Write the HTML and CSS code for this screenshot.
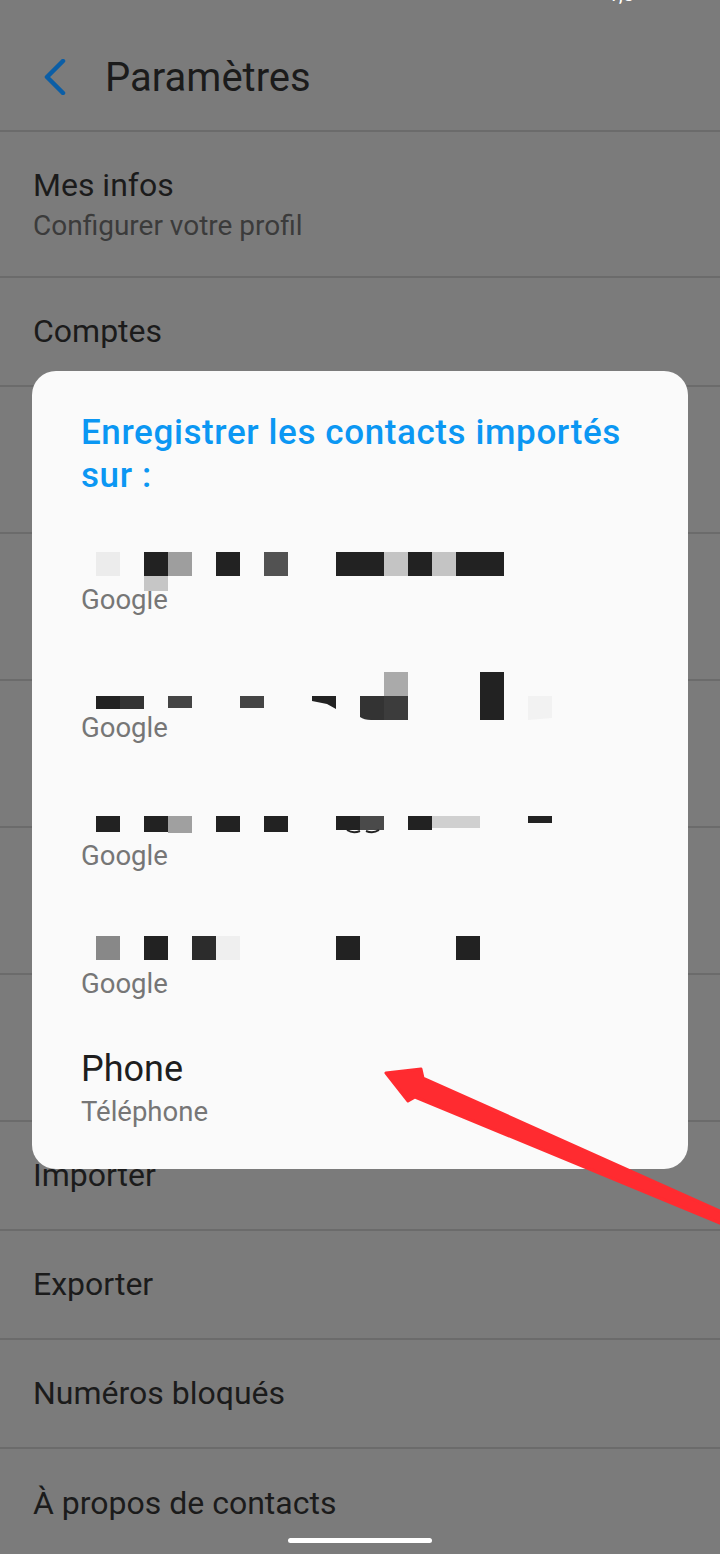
FILE: index.html
```html
<!DOCTYPE html>
<html lang="fr">
<head>
<meta charset="utf-8">
<title>Paramètres</title>
<link rel="stylesheet" href="styles.css">
</head>
<body>
<div class="screen">
  <header class="header">
    <div class="status"><span>1,5</span></div>
    <div class="toolbar">
      <svg class="back" width="24" height="36" viewBox="0 0 24 36"><polyline points="20,2 4,18 20,34" fill="none" stroke="#0b5ea6" stroke-width="4.5" stroke-linecap="round" stroke-linejoin="round"/></svg>
      <h1 class="page-title">Paramètres</h1>
    </div>
  </header>
  <ul class="settings">
    <li class="row two first"><span class="row-title">Mes infos</span><span class="row-sub">Configurer votre profil</span></li>
    <li class="row one"><span class="row-title">Comptes</span></li>
    <li class="row two"></li>
    <li class="row two"></li>
    <li class="row two"></li>
    <li class="row two"></li>
    <li class="row two"></li>
    <li class="row one"><span class="row-title">Importer</span></li>
    <li class="row one"><span class="row-title">Exporter</span></li>
    <li class="row one"><span class="row-title">Numéros bloqués</span></li>
    <li class="row one last"><span class="row-title">À propos de contacts</span></li>
  </ul>

  <div class="dialog">
    <h2 class="dialog-title">Enregistrer les contacts importés sur :</h2>
    <ul class="accounts">
      <li class="account">
        <div class="acc-name">
          <svg class="mosaic" width="480" height="40" viewBox="0 0 480 40">
            <rect x="15" y="15" width="24" height="24" fill="#ececec"/>
            <rect x="63" y="15" width="24" height="24" fill="#222"/>
            <rect x="87" y="15" width="24" height="24" fill="#9e9e9e"/>
            <rect x="63" y="39" width="24" height="15" fill="#c6c6c6"/>
            <rect x="135" y="15" width="24" height="24" fill="#222"/>
            <rect x="183" y="15" width="24" height="24" fill="#525252"/>
            <rect x="255" y="15" width="48" height="24" fill="#222"/>
            <rect x="303" y="15" width="24" height="24" fill="#c4c4c4"/>
            <rect x="327" y="15" width="24" height="24" fill="#222"/>
            <rect x="351" y="15" width="24" height="24" fill="#c4c4c4"/>
            <rect x="375" y="15" width="48" height="24" fill="#222"/>
          </svg>
        </div>
        <div class="acc-sub">Google</div>
      </li>
      <li class="account">
        <div class="acc-name">
          <svg class="mosaic" width="480" height="40" viewBox="0 0 480 40">
            <rect x="15" y="31" width="24" height="13" fill="#222"/>
            <rect x="39" y="31" width="24" height="13" fill="#333"/>
            <rect x="87" y="31" width="24" height="12" fill="#444"/>
            <rect x="159" y="31" width="24" height="12" fill="#444"/>
            <polygon points="231,31 255,31 255,44 246,39 231,36" fill="#222"/>
            <path d="M279 31 H303 V55 H290 Q283 55 279 52 Z" fill="#333"/>
            <rect x="303" y="7" width="24" height="24" fill="#aaa"/>
            <rect x="303" y="31" width="24" height="24" fill="#3c3c3c"/>
            <rect x="399" y="7" width="24" height="48" fill="#222"/>
            <path d="M447 31 H471 V53 L447 55 Z" fill="#f2f2f2"/>
          </svg>
        </div>
        <div class="acc-sub">Google</div>
      </li>
      <li class="account">
        <div class="acc-name">
          <svg class="mosaic" width="480" height="40" viewBox="0 0 480 40">
            <rect x="15" y="23" width="24" height="16" fill="#222"/>
            <rect x="63" y="23" width="24" height="16" fill="#222"/>
            <rect x="87" y="23" width="24" height="17" fill="#a0a0a0"/>
            <rect x="135" y="23" width="24" height="16" fill="#222"/>
            <rect x="183" y="23" width="24" height="16" fill="#222"/>
            <rect x="255" y="23" width="24" height="14" fill="#222"/>
            <rect x="279" y="23" width="24" height="14" fill="#4a4a4a"/>
            <path d="M266 37 Q272 41 279 38 M285 38 Q292 41 298 37" fill="none" stroke="#222" stroke-width="2"/>
            <rect x="327" y="23" width="24" height="14" fill="#222"/>
            <rect x="351" y="23" width="48" height="12" fill="#d0d0d0"/>
            <rect x="447" y="23" width="24" height="7" fill="#222"/>
          </svg>
        </div>
        <div class="acc-sub">Google</div>
      </li>
      <li class="account">
        <div class="acc-name">
          <svg class="mosaic" width="480" height="40" viewBox="0 0 480 40">
            <rect x="15" y="15" width="24" height="24" fill="#888"/>
            <rect x="63" y="15" width="24" height="24" fill="#222"/>
            <rect x="111" y="15" width="24" height="24" fill="#2c2c2c"/>
            <rect x="135" y="15" width="24" height="24" fill="#efefef"/>
            <rect x="255" y="15" width="24" height="24" fill="#222"/>
            <rect x="375" y="15" width="24" height="24" fill="#222"/>
          </svg>
        </div>
        <div class="acc-sub">Google</div>
      </li>
      <li class="account">
        <div class="acc-name phone">Phone</div>
        <div class="acc-sub">Téléphone</div>
      </li>
    </ul>
  </div>

  <svg class="annotation" width="720" height="1554" viewBox="0 0 720 1554">
    <polygon points="386,1073 421,1069 423,1078 722,1212 722,1224 415,1097 408,1101" fill="#ff2b30" stroke="#ff2b30" stroke-width="3" stroke-linejoin="round"/>
  </svg>

  <div class="nav-handle"></div>
</div>
</body>
</html>
```

FILE: styles.css
```css
* {
  box-sizing: border-box;
}

html, body {
  margin: 0;
  padding: 0;
  background: #7b7b7b;
}

body {
  font-family: Roboto, "Noto Sans", "Liberation Sans", sans-serif;
  color: #1b1b1b;
}

.screen {
  position: relative;
  width: 720px;
  height: 1554px;
  overflow: hidden;
  background: #7b7b7b;
}

.header {
  height: 132px;
  border-bottom: 2px solid #6b6b6b;
  display: flex;
  flex-direction: column;
}

.status {
  height: 24px;
  display: flex;
  justify-content: flex-end;
  padding-right: 86px;
}

.status span {
  font-size: 20px;
  line-height: 20px;
  margin-top: -16px;
  color: #ffffff;
}

.toolbar {
  flex: 1;
  display: flex;
  align-items: center;
  padding-left: 43px;
}

.back {
  display: block;
  flex: none;
}

.page-title {
  margin: 0 0 0 38px;
  font-size: 40px;
  line-height: 47px;
  font-weight: 400;
  color: #1b1b1b;
}

.settings {
  list-style: none;
  margin: 0;
  padding: 0;
}

.row {
  display: flex;
  flex-direction: column;
  justify-content: center;
  padding-left: 33px;
  border-bottom: 2px solid #6b6b6b;
}

.row.two {
  height: 147px;
  gap: 6px;
}

.row.two.first {
  height: 146px;
}

.row.one {
  height: 109px;
}

.row.last {
  border-bottom: none;
}

.row-title {
  font-size: 32px;
  line-height: 37px;
  color: #1b1b1b;
}

.row-sub {
  font-size: 28px;
  line-height: 32px;
  color: #3b3b3b;
}

.dialog {
  position: absolute;
  left: 32px;
  top: 371px;
  width: 656px;
  height: 798px;
  background: #fafafa;
  border-radius: 24px;
  padding: 40px 49px 0 49px;
}

.dialog-title {
  margin: 0 0 16px 0;
  font-size: 35px;
  line-height: 43px;
  letter-spacing: 0.6px;
  font-weight: 500;
  color: #0b97f3;
}

.accounts {
  list-style: none;
  margin: 0;
  padding: 0;
}

.account {
  height: 128px;
  padding-top: 24px;
  display: flex;
  flex-direction: column;
}

.acc-name {
  height: 40px;
  margin-bottom: 7px;
  font-size: 36px;
  line-height: 40px;
  color: #1e1e1e;
}

.mosaic {
  display: block;
  overflow: visible;
  position: relative;
  z-index: 1;
}

.acc-sub {
  font-size: 27.5px;
  line-height: 32px;
  color: #767676;
}

.annotation {
  position: absolute;
  left: 0;
  top: 0;
  pointer-events: none;
}

.nav-handle {
  position: absolute;
  left: 288px;
  top: 1538px;
  width: 144px;
  height: 5px;
  border-radius: 3px;
  background: #ffffff;
}
```
